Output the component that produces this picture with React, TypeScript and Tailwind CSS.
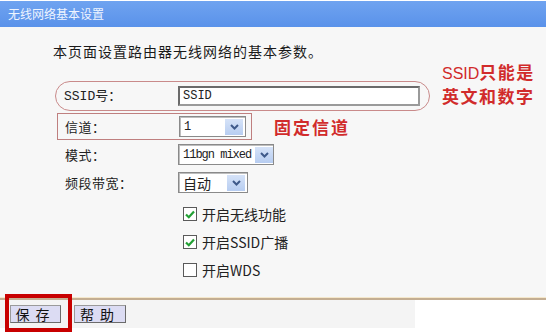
import React from "react";

const cjk = "font-['Noto_Sans_CJK_SC','Noto_Sans',sans-serif]";
const mono = "font-['Liberation_Mono','Noto_Sans_CJK_SC',monospace]";

function Arrow() {
  return (
    <span className="flex h-[16px] w-[18px] shrink-0 items-center justify-center bg-gradient-to-b from-[#d6e3f8] to-[#b7cdf1]">
      <svg width="9" height="6" viewBox="0 0 9 6">
        <path d="M1 1 L4.5 4.5 L8 1" fill="none" stroke="#3f5a8a" strokeWidth="2" />
      </svg>
    </span>
  );
}

function Select({ value, width, text }: { value: string; width: string; text: string }) {
  return (
    <div
      className={`flex h-[21px] ${width} items-center justify-between gap-[4px] border border-[#8a8a8a] bg-white pl-[4px] pr-[2px] shadow-[inset_1px_1px_0_#bdbdbd]`}
    >
      <span className={`${text} whitespace-nowrap leading-none text-[#222]`}>{value}</span>
      <Arrow />
    </div>
  );
}

function Check({ label, checked }: { label: string; checked: boolean }) {
  return (
    <div className="flex h-[20px] items-center pl-[183px]">
      <span className="flex h-[14px] w-[14px] items-center justify-center border border-[#5a5a5a] bg-white">
        {checked && (
          <svg width="10" height="9" viewBox="0 0 10 9">
            <path d="M1 4.5 L3.8 7.2 L9 1.5" fill="none" stroke="#22a034" strokeWidth="2.2" />
          </svg>
        )}
      </span>
      <span className={`${cjk} ml-[5px] text-[14px] leading-none text-[#222]`}>{label}</span>
    </div>
  );
}

export default function App() {
  return (
    <div className="relative h-[335px] w-[546px] overflow-hidden bg-white">
      <div className="mt-[1px] flex h-[26px] items-center bg-gradient-to-b from-[#6fa3f0] to-[#5a92ea] pl-[8px]">
        <span className={`${cjk} text-[12px] leading-none text-[#eef4ff]`}>无线网络基本设置</span>
      </div>

      <div className="flex h-[270px] flex-col bg-[#f7f7f7]">
        <div className={`${cjk} pl-[53px] pt-[14px] text-[14px] leading-[20px] tracking-[1px] text-[#1a1a1a]`}>
          本页面设置路由器无线网络的基本参数。
        </div>

        <div className="mt-[20px] flex items-start">
          <div className="ml-[55px] flex h-[30px] w-[375px] items-center rounded-full border-[1.5px] border-[#c98a8a] pl-[8px]">
            <span className={`${mono} w-[114px] text-[13px] leading-none text-[#222]`}>SSID号：</span>
            <div className="flex h-[20px] w-[242px] items-center border-2 border-[#6a6a6a] border-b-[#9a9a9a] border-r-[#9a9a9a] bg-white pl-[3px]">
              <span className={`${mono} text-[12px] leading-none text-[#222]`}>SSID</span>
            </div>
          </div>
          <div className="-mt-[20px] ml-[12px] flex flex-col text-[#d12b2b]">
            <span className="leading-[22px]">
              <span className="font-['Liberation_Sans',sans-serif] text-[16px]">SSID</span>
              <span className={`${cjk} text-[17px] font-bold tracking-[1.5px]`}>只能是</span>
            </span>
            <span className={`${cjk} text-[17px] font-bold leading-[22px] tracking-[1.5px]`}>英文和数字</span>
          </div>
        </div>

        <div className="mt-[2px] flex items-center">
          <div className="ml-[57px] flex h-[27px] w-[195px] items-center border-[1.5px] border-[#bf7f7f] pl-[7px]">
            <span className={`${cjk} w-[114px] text-[13px] leading-none tracking-[0.5px] text-[#222]`}>信道：</span>
            <Select value="1" width="w-[67px]" text={`${mono} text-[12px]`} />
          </div>
          <span className={`${cjk} ml-[22px] text-[17px] font-bold leading-none tracking-[2px] text-[#d12b2b]`}>固定信道</span>
        </div>

        <div className="mt-[4px] flex items-center pl-[65px]">
          <span className={`${cjk} w-[113px] text-[13px] leading-none tracking-[0.5px] text-[#222]`}>模式：</span>
          <Select value="11bgn mixed" width="w-[96px]" text={`${mono} text-[12px] tracking-[-1px]`} />
        </div>

        <div className="mt-[7px] flex items-center pl-[65px]">
          <span className={`${cjk} w-[113px] text-[13px] leading-none tracking-[0.5px] text-[#222]`}>频段带宽：</span>
          <Select value="自动" width="w-[70px]" text={`${cjk} text-[14px]`} />
        </div>

        <div className="mt-[11px] flex flex-col gap-[8px]">
          <Check label="开启无线功能" checked />
          <Check label="开启SSID广播" checked />
          <Check label="开启WDS" checked={false} />
        </div>
      </div>

      <div className="h-[1px] bg-[#f5e8cc]" />
      <div className="h-[2px] bg-[#c4ae92]" />

      <div className="flex h-[28px] w-[415px] items-center gap-[13px] bg-[#f4f4f4] pl-[10px]">
        <button className={`${cjk} flex h-[18px] w-[51px] items-center justify-center border border-[#6b6b6b] border-l-[#9a9a9a] border-t-[#9a9a9a] bg-[#dcdcf3] text-[14px] leading-none tracking-[6px] text-[#111]`}>
          保存
        </button>
        <button className={`${cjk} flex h-[18px] w-[52px] items-center justify-center border border-[#6b6b6b] border-l-[#9a9a9a] border-t-[#9a9a9a] bg-[#dcdcf3] text-[14px] leading-none tracking-[6px] text-[#111]`}>
          帮助
        </button>
      </div>

      <div className="absolute left-[5px] top-[294px] h-[38px] w-[67px] border-[4px] border-[#c80000]" />
    </div>
  );
}
